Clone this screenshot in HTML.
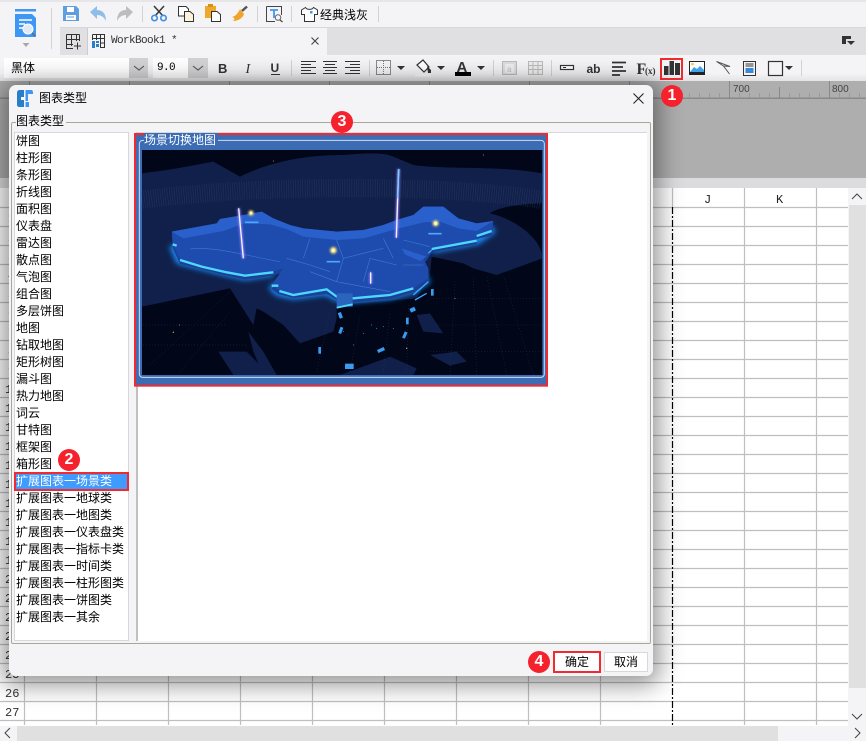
<!DOCTYPE html>
<html><head><meta charset="utf-8"><style>
html,body{margin:0;padding:0}
body{width:866px;height:741px;overflow:hidden;position:relative;background:#fff;font-family:"WenQuanYi Zen Hei","Noto Sans CJK SC",sans-serif;font-size:12px;color:#000}
.a{position:absolute}
.li{position:absolute;left:16px;height:17px;line-height:17px;white-space:nowrap;font-size:12px}
.sep{position:absolute;width:1px;background:#d2d2d4}
.badge{position:absolute;width:22px;height:22px;border-radius:50%;background:#f5222d;color:#fff;text-align:center;font:bold 16px/22px "Liberation Sans",sans-serif}
svg{position:absolute;overflow:visible}
</style></head><body>
<!-- top -->
<div class="a" style="left:0;top:0;width:866px;height:2px;background:#e6e6e8"></div>
<div class="a" style="left:0;top:2px;width:866px;height:25px;background:#f4f4f6"></div>
<div class="a" style="left:0;top:27px;width:60px;height:28px;background:#f4f4f6"></div>
<div class="a" style="left:60px;top:27px;width:806px;height:28px;background:#e0e0e2"></div>
<div class="a" style="left:87px;top:28px;width:239px;height:27px;background:#f4f4f6;border-left:1px solid #ccc"></div>
<div class="a" style="left:60px;top:27px;width:806px;height:1px;background:#d8d8da"></div>
<div class="a" style="left:0;top:55px;width:866px;height:26px;background:linear-gradient(#f4f4f6 70%,#e4e4e6)"></div>
<svg style="left:0;top:0" width="866" height="81" viewBox="0 0 866 81">
<rect x="15" y="9" width="21" height="2.500" fill="#3f97f5"/>
<path d="M15 14H32L36 18V37H15Z" fill="#3f97f5"/>
<path d="M19 20H32M19 24H25M19 28H23" stroke="#fff" stroke-width="1.400"/>
<circle cx="28" cy="29" r="5" fill="#dfeaf5" stroke="#fff"/><path d="M32 33L35 36" stroke="#666" stroke-width="1.500"/>
<path d="M22.500 43H29.500L26 47Z" fill="#a8a8a8"/>
<path d="M63 6H76L79 9V21H63Z" fill="#5f9fe0"/><rect x="67" y="7" width="7" height="5" fill="#fff"/><rect x="66" y="15" width="10" height="5" fill="#fff"/><path d="M67 17H74" stroke="#5f9fe0"/>
<path d="M90 12L97 6V10C103 10 106 14 106 21C104 17 101 15 97 15V19Z" fill="#8fbdea"/>
<path d="M133 12L126 6V10C120 10 117 14 117 21C119 17 122 15 126 15V19Z" fill="#bdbdbd"/>
<path d="M154 6L163 16M164 6L155 16" stroke="#3c3c3c" stroke-width="1.600"/>
<circle cx="154.500" cy="18" r="2.700" fill="none" stroke="#3f8fe8" stroke-width="1.700"/><circle cx="163.500" cy="18" r="2.700" fill="none" stroke="#3f8fe8" stroke-width="1.700"/>
<path d="M178.500 6.500H186L188.500 9V16H178.500Z" fill="#fff" stroke="#333"/>
<path d="M184.500 11.500H190L193.500 14.500V21.500H184.500Z" fill="#fbf3dc" stroke="#333"/>
<path d="M205 6H216V18H205Z" fill="#f0a82c"/><rect x="208" y="4" width="5" height="3" fill="#d88f12"/>
<path d="M211.500 11.500H217L220.500 14.500V21.500H211.500Z" fill="#fff" stroke="#333"/>
<path d="M242 11L247 6.500" stroke="#555" stroke-width="2.500"/><path d="M240 9L244 14C243 18 238 21 233 21C235 19 235 18 232 17C236 16 238 13 240 9Z" fill="#f0a52a"/>
<path d="M266.500 6.500H281.500V15M266.500 6.500V21.500H275" fill="none" stroke="#444"/>
<path d="M270 10H278M274 10V18" stroke="#3f97f5" stroke-width="1.800"/>
<circle cx="278" cy="17.500" r="2.800" fill="#f4f4f6" stroke="#666"/><path d="M280 20L282.500 22" stroke="#444" stroke-width="1.200"/>
<path d="M305.500 7.500L301.500 10V14.500H304.500V21.500H314.500V14.500H317.500V10L313.500 7.500C312 10 307 10 305.500 7.500Z" fill="#fff" stroke="#333"/><rect x="310" y="11" width="2.500" height="2.500" fill="#3f97f5"/>
<path d="M66.500 34.500H79.500M66.500 39.500H79.500M66.500 44.500H73M66.500 34.500V48.500H73M71.500 34.500V46M76.500 34.500V41M79.500 34.500V41" fill="none" stroke="#333"/>
<path d="M74 46H81M77.500 42.500V49.500" stroke="#333"/>
<path d="M92.500 34.500H104.500V47.500H100M92.500 38.500H104.500M96.500 34.500V40M100.500 34.500V47.500M100.500 43H104.500M92.500 34.500V40" fill="none" stroke="#333"/>
<path d="M92 41H95V48H92ZM96 41H99V43H96ZM96 44H99V47H96Z" fill="#2a7dc9"/>
<path d="M311.500 37.500L318.500 44.500M318.500 37.500L311.500 44.500" stroke="#444" stroke-width="1.100"/>
<path d="M842 36H851V39H846V44H842Z" fill="#333"/><path d="M847 41H855L851 45Z" fill="#333"/>
<text x="218" y="73" font-family="Liberation Sans" font-weight="bold" font-size="13" fill="#333">B</text>
<text x="245.500" y="73" font-family="Liberation Serif" font-style="italic" font-size="14" fill="#333">I</text>
<text x="270.500" y="72" font-family="Liberation Sans" font-weight="bold" font-size="12" fill="#333">U</text><path d="M271 74.500H280" stroke="#333"/>
<path d="M301 61.500H316M301 64.500H311M301 67.500H316M301 70.500H311M301 73.500H316" stroke="#333"/>
<path d="M323 61.500H337M325 64.500H335M323 67.500H337M325 70.500H335M323 73.500H337" stroke="#333"/>
<path d="M345 61.500H360M350 64.500H360M345 67.500H360M350 70.500H360M345 73.500H360" stroke="#333"/>
<g shape-rendering="crispEdges"><rect x="376.500" y="60.500" width="14" height="14" fill="none" stroke="#222" stroke-dasharray="1 1"/><path d="M377 67.500H390M383.500 61V74" stroke="#777" stroke-dasharray="1 1"/></g>
<path d="M397 66H405L401 70Z" fill="#333"/>
<path d="M417 65L423 60L429 67L424 72Z" fill="#fff" stroke="#333" stroke-width="1.200"/><path d="M427 66L431 70L431 73H428Z" fill="#333"/><rect x="415" y="74" width="16" height="2.500" fill="#f8f8f8"/>
<path d="M437 66H445L441 70Z" fill="#333"/>
<text x="456.500" y="72" font-family="Liberation Sans" font-weight="bold" font-size="15" fill="#333">A</text><rect x="455" y="72" width="16" height="4" fill="#000"/>
<path d="M477 66H485L481 70Z" fill="#333"/>
<rect x="502.500" y="61.500" width="14" height="13" fill="#ddd" stroke="#bbb"/><rect x="505" y="64" width="9" height="9" fill="#eee"/><text x="507" y="72" font-size="8" fill="#bbb" font-family="Liberation Sans">a</text>
<rect x="528.500" y="61.500" width="14" height="13" fill="#eee" stroke="#bbb"/><path d="M529 65.500H542M529 69.500H542M533 62V74M538 62V74" stroke="#bbb"/>
<rect x="560.500" y="65.500" width="13" height="4" fill="#fff" stroke="#333" stroke-width="1.200"/><path d="M563 67.500H566" stroke="#333"/>
<text x="586.500" y="73" font-family="Liberation Sans" font-weight="bold" font-size="12" fill="#333">ab</text>
<path d="M612 62.500H626M612 67H623M612 71H626M612 75H620" stroke="#333" stroke-width="1.800"/>
<text x="636.500" y="74" font-family="Liberation Serif" font-weight="bold" font-size="16" fill="#333">F</text><text x="645" y="74" font-family="Liberation Serif" font-weight="bold" font-size="9" fill="#333">(x)</text>
<rect x="664" y="66" width="4.500" height="9" fill="#333"/><rect x="669.500" y="61" width="4.500" height="14" fill="#333"/><rect x="675" y="63" width="5" height="12" fill="#333"/>
<rect x="661" y="59" width="21" height="20" fill="none" stroke="#f02a30" stroke-width="2"/>
<rect x="689.500" y="61.500" width="15" height="13" fill="#fff" stroke="#222"/><rect x="689" y="72" width="16" height="3" fill="#222"/>
<path d="M690 72L694 67L697 69L700 66L704 70V72Z" fill="#3ea2e8"/><circle cx="692.500" cy="64" r="1.300" fill="#f5c33a"/>
<path d="M716.500 61.500L730 66.500L723.500 66L729.500 74M716.500 61.500L723.500 66" fill="none" stroke="#555"/>
<rect x="743.500" y="61.500" width="12" height="14" fill="#f4f4f6" stroke="#333"/><path d="M745.500 64H753.500M745.500 66H753.500" stroke="#333"/><rect x="745.500" y="68" width="8" height="5" fill="#3a88d8"/>
<rect x="768.500" y="61.500" width="14" height="14" fill="none" stroke="#333" stroke-width="1.200"/>
<path d="M785 66H793L789 70Z" fill="#333"/>
</svg>
<div class="a" style="left:320px;top:8px;font-size:12px;line-height:14px;white-space:nowrap">经典浅灰</div>
<div class="sep" style="left:51px;top:8px;height:41px"></div>
<div class="sep" style="left:142px;top:6px;height:16px"></div>
<div class="sep" style="left:257px;top:6px;height:16px"></div>
<div class="sep" style="left:291px;top:6px;height:16px"></div>
<div class="sep" style="left:378px;top:6px;height:16px"></div>
<div class="sep" style="left:291px;top:60px;height:16px"></div>
<div class="sep" style="left:369px;top:60px;height:16px"></div>
<div class="sep" style="left:493px;top:60px;height:16px"></div>
<div class="sep" style="left:551px;top:60px;height:16px"></div>
<div class="sep" style="left:801px;top:60px;height:16px"></div>
<div class="a" style="left:111px;top:34px;font:11px/14px 'Liberation Mono',monospace;letter-spacing:-.6px;color:#333;white-space:nowrap">WorkBook1 *</div>
<div class="a" style="left:4px;top:58px;width:125px;height:20px;background:#fff;line-height:20px;text-indent:7px;font-size:12px">黑体</div>
<div class="a" style="left:129px;top:58px;width:19px;height:20px;background:#d2d2d4"></div>
<div class="a" style="left:153px;top:58px;width:35px;height:20px;background:#fff;font:11px/20px 'Liberation Mono',monospace;letter-spacing:-.6px;text-indent:4px">9.0</div>
<div class="a" style="left:188px;top:58px;width:20px;height:20px;background:#d2d2d4"></div>
<svg style="left:0;top:0" width="300" height="81"><path d="M134 66L139 70L144 66M193 66L198 70L203 66" fill="none" stroke="#555" stroke-width="1.100"/></svg>
<!-- ruler area -->
<div class="a" style="left:0;top:81px;width:866px;height:97px;background:#aeaeae"></div>
<svg style="left:0;top:81px" width="866" height="20">
<rect x="0" y="16.500" width="866" height="1.500" fill="#8a8a8a"/>
<path d="M29.500 0V17M129.500 0V17M229.500 0V17M329.500 0V17M429.500 0V17M529.500 0V17M629.500 0V17M729.500 0V17M829.500 0V17M779.500 6V17M679.500 6V17" stroke="#8a8a8a"/>
<path d="M689.500 12V17M699.500 12V17M709.500 12V17M719.500 12V17M739.500 12V17M749.500 12V17M759.500 12V17M769.500 12V17M789.500 12V17M799.500 12V17M809.500 12V17M819.500 12V17M839.500 12V17M849.500 12V17M859.500 12V17" stroke="#999"/>
<text x="733" y="11" font-family="Liberation Sans" font-size="10" fill="#444">700</text>
<text x="832" y="11" font-family="Liberation Sans" font-size="10" fill="#444">800</text>
</svg>
<div class="a" style="left:0;top:178px;width:866px;height:10px;background:#dcdcde"></div>
<!-- grid -->
<svg style="left:0;top:188px" width="866" height="553">
<g stroke="#bfbfbf" stroke-width="1.200" fill="none">
<path d="M24.500 0V537M96.500 0V537M168.500 0V537M240.500 0V537M312.500 0V537M384.500 0V537M456.500 0V537M528.500 0V537M600.500 0V537M672.500 0V19M744.500 0V537M816.500 0V537"/>
<path d="M0 19.500H848M0 38.500H848M0 57.500H848M0 76.500H848M0 95.500H848M0 114.500H848M0 133.500H848M0 152.500H848M0 171.500H848M0 190.500H848M0 209.500H848M0 228.500H848M0 247.500H848M0 266.500H848M0 285.500H848M0 304.500H848M0 323.500H848M0 342.500H848M0 361.500H848M0 380.500H848M0 399.500H848M0 418.500H848M0 437.500H848M0 456.500H848M0 475.500H848M0 494.500H848M0 513.500H848M0 532.500H848"/>
</g>
<path d="M672.500 19V537" stroke="#000" stroke-width="1.200" stroke-dasharray="7 2 2 2"/>
<g font-family="Liberation Mono" font-size="12" fill="#333">
<text x="8" y="34">1</text><text x="8" y="53">2</text><text x="8" y="72">3</text><text x="8" y="91">4</text><text x="8" y="110">5</text><text x="8" y="129">6</text><text x="8" y="148">7</text><text x="8" y="167">8</text><text x="8" y="186">9</text>
<text x="5" y="205">10</text><text x="5" y="224">11</text><text x="5" y="243">12</text><text x="5" y="262">13</text><text x="5" y="281">14</text><text x="5" y="300">15</text><text x="5" y="319">16</text><text x="5" y="338">17</text><text x="5" y="357">18</text><text x="5" y="376">19</text><text x="5" y="395">20</text><text x="5" y="414">21</text><text x="5" y="433">22</text><text x="5" y="452">23</text><text x="5" y="471">24</text><text x="5" y="490">25</text>
<text x="5" y="509">26</text><text x="5" y="528">27</text>
<text x="704" y="15" fill="#222">J</text><text x="776" y="15" fill="#222">K</text>
</g>
<rect x="848" y="0" width="18" height="553" fill="#f4f4f6"/>
<rect x="849" y="17" width="17" height="483" fill="#e0e0e0"/>
<path d="M852 11L857 6L862 11" fill="none" stroke="#444"/>
<path d="M852 526L857 531L862 526" fill="none" stroke="#444"/>
<rect x="0" y="538" width="848" height="15" fill="#f4f4f6"/>
<rect x="17" y="538" width="761" height="15" fill="#e0e0e0"/>
<path d="M10 540L5 545L10 550" fill="none" stroke="#444"/>
<path d="M855 540L860 545L855 550" fill="none" stroke="#444"/>
</svg>
<!-- dialog -->
<div class="a" style="left:9px;top:85px;width:644px;height:591px;background:#f4f4f6;border-radius:7px;box-shadow:0 3px 24px 6px rgba(0,0,0,.42)"></div>
<svg style="left:0;top:85px" width="653" height="32">
<path d="M17 8C17 6 18 5 20 5H24V22H19C18 22 17 21 17 20Z" fill="#2a7dc9"/><path d="M25.500 5H31C32.500 5 33 6 33 7.500V9H28V16H25.500Z" fill="#3f97f5"/><path d="M21 12H25V15H21Z" fill="#fff"/><path d="M25.500 17H29V22H25.500Z" fill="#3f97f5"/>
<path d="M633.500 8.500L643.500 18.500M643.500 8.500L633.500 18.500" stroke="#222" stroke-width="1.100"/>
</svg>
<div class="a" style="left:39px;top:90px;font-size:12px;line-height:16px;white-space:nowrap">图表类型</div>
<div class="a" style="left:11px;top:122px;width:638px;height:520px;border:1px solid #a8a898;border-radius:2px"></div>
<div class="a" style="left:16px;top:113px;padding:0 2px 0 0;height:16px;line-height:16px;background:#f4f4f6;white-space:nowrap">图表类型</div>
<div class="a" style="left:14px;top:132px;width:113px;height:507px;background:#fff;border:1px solid #d8d8da"></div>
<div class="a" style="left:136px;top:132px;width:509px;height:508px;background:#fff;border-left:2px solid #c0c0c2;border-top:1px solid #d8d8da"></div>
<div class="a" style="left:15px;top:473px;height:15px;background:#3f9bfd;outline:1px solid #f02a30;border:1px solid #f02a30;box-sizing:content-box;width:111px"></div>
<div class="li" style="top:132px">饼图</div>
<div class="li" style="top:149px">柱形图</div>
<div class="li" style="top:166px">条形图</div>
<div class="li" style="top:183px">折线图</div>
<div class="li" style="top:200px">面积图</div>
<div class="li" style="top:217px">仪表盘</div>
<div class="li" style="top:234px">雷达图</div>
<div class="li" style="top:251px">散点图</div>
<div class="li" style="top:268px">气泡图</div>
<div class="li" style="top:285px">组合图</div>
<div class="li" style="top:302px">多层饼图</div>
<div class="li" style="top:319px">地图</div>
<div class="li" style="top:336px">钻取地图</div>
<div class="li" style="top:353px">矩形树图</div>
<div class="li" style="top:370px">漏斗图</div>
<div class="li" style="top:387px">热力地图</div>
<div class="li" style="top:404px">词云</div>
<div class="li" style="top:421px">甘特图</div>
<div class="li" style="top:438px">框架图</div>
<div class="li" style="top:455px">箱形图</div>
<div class="li" style="top:472px;color:#fff">扩展图表一场景类</div>
<div class="li" style="top:489px">扩展图表一地球类</div>
<div class="li" style="top:506px">扩展图表一地图类</div>
<div class="li" style="top:523px">扩展图表一仪表盘类</div>
<div class="li" style="top:540px">扩展图表一指标卡类</div>
<div class="li" style="top:557px">扩展图表一时间类</div>
<div class="li" style="top:574px">扩展图表一柱形图类</div>
<div class="li" style="top:591px">扩展图表一饼图类</div>
<div class="li" style="top:608px">扩展图表一其余</div>
<!-- preview -->
<svg style="left:130px;top:125px" width="430" height="270" viewBox="0 0 1290 810">
<defs>
<filter id="gl" x="-20%" y="-40%" width="140%" height="180%"><feGaussianBlur stdDeviation="9"/></filter>
<filter id="gs" x="-300%" y="-50%" width="700%" height="200%"><feGaussianBlur stdDeviation="3"/></filter>
<filter id="gd" x="-100%" y="-100%" width="300%" height="300%"><feGaussianBlur stdDeviation="3"/></filter>
<clipPath id="c"><rect x="36" y="75" width="1201" height="675"/></clipPath>
<path id="ch" d="M125 320L260 295L270 282L340 270L395 260L430 280L480 300L520 310L620 320L700 315L760 300L800 285L850 270L880 245L940 245L985 280L1040 295L1090 288L1085 320L1040 330L1040 345L905 370L890 395L880 400L895 430L895 460L850 490L780 510L670 520L620 512L590 495L490 507L445 495L425 480L460 430L430 440L345 452L290 440L150 405L130 360Z"/>
</defs>
<rect x="15" y="27" width="1236" height="755" fill="#3b6cb4" stroke="#f02a30" stroke-width="6"/>
<rect x="28" y="46" width="1215" height="711" rx="10" fill="none" stroke="#cfdcf0" stroke-width="3"/>
<rect x="36" y="75" width="1201" height="675" fill="#010618"/>
<g clip-path="url(#c)">
<path d="M36 145C120 135 170 125 250 110L330 155C400 120 500 90 640 90C700 85 760 80 790 95L850 120C950 135 1100 120 1237 145V235C1150 235 1090 255 1080 265C1150 280 1237 340 1237 400L1100 450L1030 430L1000 415L905 395L900 450L860 520L620 540L620 580L610 620L510 655L460 600L400 560L380 550L370 600L300 490L36 545Z" fill="#10204a"/>
<path d="M265 680L350 680L420 750H310Z" fill="#10204a"/><path d="M355 620L400 680L440 750H400L370 680Z" fill="#10204a"/>
<path d="M630 750L780 695L860 730L850 750Z" fill="#10204a"/><path d="M860 570L900 565L940 625L880 620Z" fill="#10204a"/>
<path d="M900 690L980 680L1010 710L960 722Z" fill="#10204a"/>
<path d="M36 225C300 185 900 170 1237 225" fill="none" stroke="#2a3c66" stroke-width="55" stroke-dasharray="2 5" opacity=".6"/>
<g stroke="#22485a" stroke-width="1.500" fill="none" stroke-dasharray="2 7">
<path d="M60 720L300 500M150 740L300 560M40 600H290M40 660H350M560 740L600 560M660 740L690 570M760 740L780 560M830 740L835 540M960 750L975 470M1040 750L1030 460M1130 750L1070 450M1210 750L1120 450M900 520H1237M920 600H1237M900 680H1237"/>
</g>
<g fill="#c9b25a"><circle cx="130" cy="622" r="2"/><circle cx="148" cy="600" r="1.500"/><circle cx="975" cy="520" r="1.500"/><circle cx="830" cy="670" r="2"/><circle cx="1060" cy="90" r="1.500"/><circle cx="430" cy="108" r="1.500"/></g>
<g fill="#3a9cf0"><circle cx="725" cy="600" r="1.500"/><circle cx="740" cy="610" r="1.500"/><circle cx="760" cy="605" r="1.500"/><circle cx="790" cy="610" r="1.500"/><circle cx="700" cy="625" r="1.500"/><circle cx="670" cy="660" r="1.500"/><circle cx="640" cy="620" r="1.500"/></g>
<path d="M130 360L150 405L290 440L345 452L430 440M425 480L445 500L490 510L590 497L620 515L670 520L780 510L850 490L895 460M905 370L1040 345L1090 310" fill="none" stroke="#1f8dff" stroke-width="26" filter="url(#gl)"/>
<use href="#ch" y="12" fill="#1a4196"/>
<use href="#ch" fill="#1e4cae"/>
<path d="M125 320L260 295L270 282L340 270L395 260L430 280L480 300L520 310L620 320L700 315L760 300L800 285L850 270L880 245L940 245L985 280L1040 295L1090 288L1040 318L985 310L930 290L880 292L800 312L700 340L620 345L520 335L470 312L420 298L340 296L280 318L160 340Z" fill="#2a60cc"/>
<path d="M815 370L880 392L890 395L870 408L825 388Z" fill="#2a60cc"/>
<path d="M180 372C260 362 380 400 450 410M470 400L540 420L600 440M620 470L640 400L760 370M700 470L720 400L800 420M540 440L620 470L780 500M820 420L880 420M820 345L900 365M620 345L640 400M540 340L520 400M760 340L790 400" fill="none" stroke="#5a9ae8" stroke-width="1.800" opacity=".6"/>
<path d="M590 410H630M895 326H935M345 292H385" stroke="#4fa8ff" stroke-width="5"/>
<path d="M150 405L215 425L290 442L345 452L430 442M425 482L445 482M448 498L490 510L590 493L620 515L670 520L780 510L850 490M905 372L1040 347M1040 333L1085 318M128 358L140 362" fill="none" stroke="#4ed8ff" stroke-width="7"/>
<path d="M850 510L895 470M855 525L890 505M895 385L905 375" fill="none" stroke="#3aa8ff" stroke-width="4"/>
<path d="M620 505H668V545H620Z" fill="#2a65bd"/><path d="M620 548L668 538" stroke="#4ed8ff" stroke-width="6"/>
<g fill="#3a9cf0"><rect x="626" y="562" width="10" height="18" transform="rotate(-20 631 571)"/><rect x="628" y="606" width="9" height="20" transform="rotate(20 632 616)"/><rect x="565" y="666" width="8" height="20"/><rect x="742" y="670" width="22" height="10" transform="rotate(-25 753 675)"/><rect x="645" y="716" width="26" height="16"/><rect x="820" y="620" width="9" height="20" transform="rotate(25 824 630)"/><rect x="828" y="578" width="8" height="20"/><rect x="840" y="548" width="16" height="12" transform="rotate(-25 848 554)"/><rect x="903" y="492" width="8" height="20"/></g>
<g filter="url(#gs)"><path d="M326 250L340 400M806 132L799 338M722 442V476" stroke="#9a7cff" stroke-width="8"/></g>
<path d="M326 250L340 400M806 132L799 338M722 442V476" stroke="#f0f4ff" stroke-width="4"/>
<path d="M806 132L803 220" stroke="#6ad0ff" stroke-width="4"/>
<g filter="url(#gd)" fill="#ffe56a"><circle cx="363" cy="264" r="8"/><circle cx="610" cy="376" r="10"/><circle cx="917" cy="295" r="9"/></g>
<g fill="#fff6c0"><circle cx="363" cy="264" r="4"/><circle cx="610" cy="376" r="5"/><circle cx="917" cy="295" r="5"/></g>
</g>
</svg>
<div class="a" style="left:144px;top:133px;font-size:12px;line-height:14px;color:#fff;background:#3b6cb4;padding:0 2px 0 0;white-space:nowrap">场景切换地图</div>
<div class="a" style="left:553px;top:651px;width:44px;height:18px;background:#fff;border:2px solid #f02a30;text-align:center;line-height:18px;font-size:12px">确定</div>
<div class="a" style="left:604px;top:652px;width:42px;height:18px;background:#fff;border:1px solid #d8d8da;text-align:center;line-height:18px;font-size:12px">取消</div>
<div class="badge" style="left:661px;top:85px">1</div>
<div class="badge" style="left:58px;top:449px">2</div>
<div class="badge" style="left:331px;top:111px">3</div>
<div class="badge" style="left:528px;top:651px">4</div>
</body></html>
